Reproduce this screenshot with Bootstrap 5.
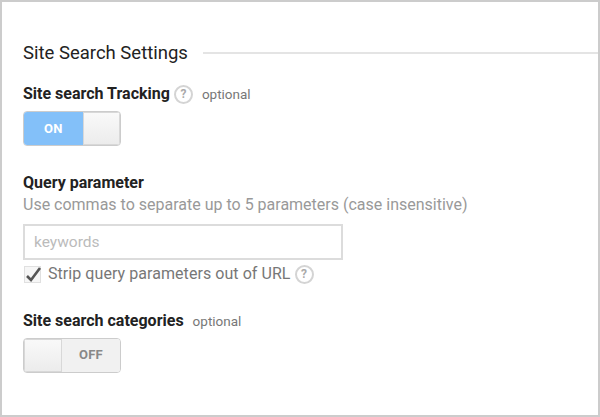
<!DOCTYPE html>
<html lang="en">
<head>
  <meta charset="UTF-8">
  <title>Site Search Settings</title>
  <link href="https://cdn.jsdelivr.net/npm/bootstrap@5.3.2/dist/css/bootstrap.min.css" rel="stylesheet">
  <style>
    html, body { height: 100%; overflow: hidden; }
    body { font-family: Roboto, "Liberation Sans", sans-serif; background: #fff; }
    .frame { width: 600px; height: 417px; border: 2px solid #ccc; padding: 40px 0 0 21px; }
    .sec-title { font-size: 18.5px; line-height: 22px; color: #222; gap: 15px; margin-bottom: 20px; }
    .sec-line { flex: 1; height: 2px; background: #e4e4e4; }
    .lbl { font-size: 16px; line-height: 20px; font-weight: 700; color: #222; }
    .opt { font-size: 13.5px; color: #777; margin-left: 9px; }
    .qmark { width: 19px; height: 19px; border: 2px solid #d4d4d4; border-radius: 50%; color: #aaa; font-size: 12px; font-weight: 700; line-height: 15px; text-align: center; }
    .tgl { width: 98px; height: 35px; border: 1px solid #ccc; border-radius: 4px; overflow: hidden; font-size: 13px; font-weight: 700; letter-spacing: .3px; }
    .tgl-on { width: 60px; background: #83c0f9; color: #fff; }
    .tgl-off { flex: 1; background: #f1f1f1; color: #888; }
    .tgl-knob { width: 38px; background: linear-gradient(#f9f9f9, #ececec); border: 1px solid #d8d8d8; }
    .hint { font-size: 16px; line-height: 20px; color: #999; margin-top: 2px; margin-bottom: 9px; }
    .kw-input { width: 320px; height: 36px; border: 2px solid #dcdcdc; border-radius: 0; font-size: 15.5px; padding: 0 9px; }
    .kw-input::placeholder { color: #bbb; }
    .chk-box { width: 17px; height: 17px; border: 1px solid #e0e0e0; background: #f6f6f6; }
    .strip { font-size: 16px; line-height: 20px; color: #777; margin-left: 7px; letter-spacing: .06px; }
    .q-row { margin-top: 4px; margin-left: 1px; }
    .lbl-row { margin-bottom: 7px; }
    .cat-row { margin-top: 27px; margin-bottom: 6px; }
    .query-lbl { margin-top: 27px; }
  </style>
</head>
<body>
  <div class="frame">
    <div class="sec-title d-flex align-items-center">
      <span>Site Search Settings</span>
      <span class="sec-line"></span>
    </div>

    <div class="d-flex align-items-center lbl-row">
      <span class="lbl">Site search Tracking</span>
      <span class="qmark ms-1">?</span>
      <span class="opt">optional</span>
    </div>
    <div class="tgl d-flex">
      <div class="tgl-on d-flex align-items-center justify-content-center">ON</div>
      <div class="tgl-knob"></div>
    </div>

    <div class="lbl query-lbl">Query parameter</div>
    <div class="hint">Use commas to separate up to 5 parameters (case insensitive)</div>
    <input class="kw-input form-control" type="text" placeholder="keywords">

    <div class="d-flex align-items-center q-row">
      <span class="chk-box position-relative">
        <svg class="position-absolute top-0 start-0" width="20" height="18" viewBox="0 0 20 18"><path d="M2 9l4 4L15 1" fill="none" stroke="#555" stroke-width="2.6"/></svg>
      </span>
      <span class="strip">Strip query parameters out of URL</span>
      <span class="qmark ms-1">?</span>
    </div>

    <div class="d-flex align-items-center cat-row">
      <span class="lbl">Site search categories</span>
      <span class="opt">optional</span>
    </div>
    <div class="tgl d-flex">
      <div class="tgl-knob"></div>
      <div class="tgl-off d-flex align-items-center justify-content-center">OFF</div>
    </div>
  </div>
  <script src="https://cdn.jsdelivr.net/npm/bootstrap@5.3.2/dist/js/bootstrap.bundle.min.js"></script>
</body>
</html>
